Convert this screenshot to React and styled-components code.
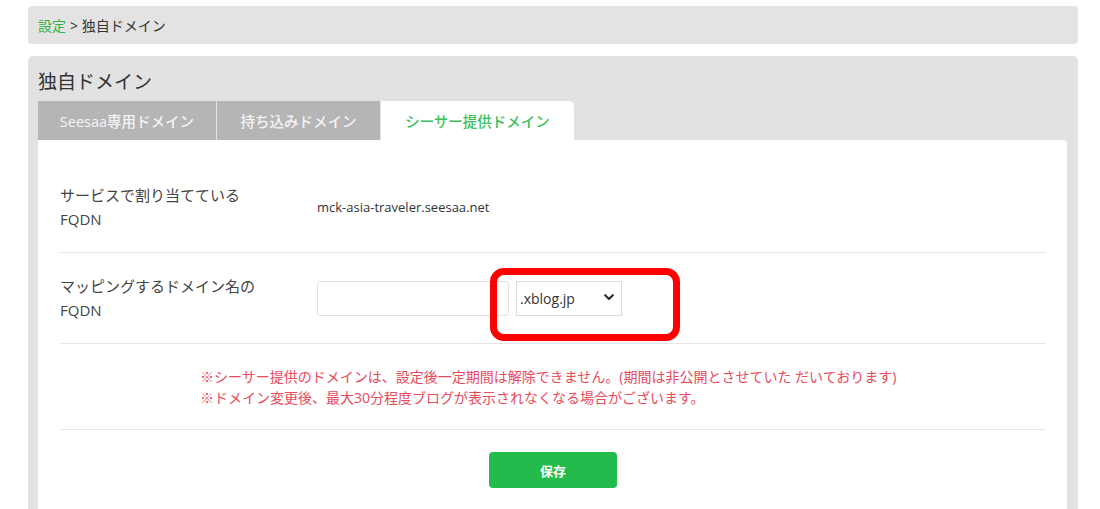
import React from 'react'
import styled, { createGlobalStyle } from 'styled-components'

const GlobalStyle = createGlobalStyle`
  body {
    margin: 0;
    background: #ffffff;
    font-family: 'Open Sans', 'Noto Sans CJK JP', sans-serif;
    color: #333333;
  }
`

const Page = styled.div`
  padding: 6px 22px 0 28px;
  height: 509px;
  box-sizing: border-box;
  overflow: hidden;
`

const Breadcrumb = styled.nav`
  display: flex;
  align-items: center;

  height: 38px;
  padding-left: 10px;
  margin-bottom: 12px;

  font-size: 14px;
  color: #333333;

  background: #e3e3e3;
  border-radius: 4px;
`

const CrumbLink = styled.a`
  color: #2eb34d;
  text-decoration: none;
  margin-right: 4px;
`

const Panel = styled.section`
  padding: 0 11px 0 10px;
  background: #e2e2e2;
  border-radius: 5px 5px 0 0;
  min-height: 460px;
`

const Title = styled.h1`
  margin: 0;
  padding: 13px 0 6px;

  font-size: 19px;
  font-weight: 400;
  line-height: 26px;
  color: #333333;
`

const Tabs = styled.div`
  display: flex;
  gap: 1px;
`

const Tab = styled.button`
  height: 39px;
  width: ${p => p.$width}px;
  padding: 0;

  font-family: 'Open Sans', 'Noto Sans CJK JP', sans-serif;
  font-size: 14.5px;
  font-weight: 500;

  color: ${p => (p.$active ? '#3cbf5c' : '#f4f4f4')};
  background: ${p => (p.$active ? '#ffffff' : '#b5b5b5')};

  border: none;
  border-radius: ${p => (p.$active ? '0 5px 0 0' : '0')};
  cursor: pointer;
`

const Content = styled.div`
  padding: 20px 21px 30px 22px;
  background: #ffffff;
  border-radius: 0 4px 0 0;
`

const Row = styled.div`
  display: flex;
  align-items: center;
  padding: ${p => p.$pad || '21px 0 21px'};
  border-bottom: 1px solid #e6e6e6;
`

const Label = styled.div`
  flex: 0 0 257px;
  font-size: 15px;
  line-height: 24px;
  color: #444444;
`

const Value = styled.div`
  font-size: 13px;
  color: #333333;
`

const Controls = styled.div`
  display: flex;
  align-items: center;
  gap: 7px;
`

const TextInput = styled.input`
  width: 192px;
  height: 35px;
  box-sizing: border-box;
  padding: 0 8px;

  font-size: 14px;

  border: 1px solid #dde3e6;
  border-radius: 3px;
  outline: none;
`

const SelectWrap = styled.div`
  position: relative;
`

const Select = styled.select`
  width: 106px;
  height: 35px;
  box-sizing: border-box;
  padding: 0 20px 0 3px;

  font-family: 'Open Sans', 'Noto Sans CJK JP', sans-serif;
  font-size: 14px;
  color: #333333;

  background: #ffffff;
  border: 1px solid #dcdcdc;
  border-radius: 0;
  appearance: none;
  outline: none;
`

const Chevron = styled.svg`
  position: absolute;
  top: 13px;
  right: 8px;
  pointer-events: none;
`

const Highlight = styled.div`
  position: absolute;
  top: -13px;
  left: -26px;
  width: 190px;
  height: 73px;
  box-sizing: border-box;

  border: 7px solid #ff0000;
  border-radius: 14px;
  pointer-events: none;
`

const Notes = styled.div`
  padding-left: 140px;
  font-size: 14px;
  line-height: 21px;
  color: #e94a5c;
`

const SaveRow = styled.div`
  display: flex;
  justify-content: center;
  padding-top: 22px;
`

const SaveButton = styled.button`
  width: 128px;
  height: 36px;

  font-family: 'Open Sans', 'Noto Sans CJK JP', sans-serif;
  font-size: 13px;
  font-weight: 700;
  color: #ffffff;

  background: #22bb4c;
  border: none;
  border-radius: 4px;
  cursor: pointer;
`

const App = () => (
  <Page>
    <GlobalStyle />
    <Breadcrumb>
      <CrumbLink href="#">設定</CrumbLink>
      <span>&gt; 独自ドメイン</span>
    </Breadcrumb>
    <Panel>
      <Title>独自ドメイン</Title>
      <Tabs>
        <Tab $width={178}>Seesaa専用ドメイン</Tab>
        <Tab $width={163}>持ち込みドメイン</Tab>
        <Tab $width={193} $active>シーサー提供ドメイン</Tab>
      </Tabs>
      <Content>
        <Row $pad="23px 0 21px">
          <Label>
            サービスで割り当てている
            <br />
            FQDN
          </Label>
          <Value>mck-asia-traveler.seesaa.net</Value>
        </Row>
        <Row>
          <Label>
            マッピングするドメイン名の
            <br />
            FQDN
          </Label>
          <Controls>
            <TextInput type="text" />
            <SelectWrap>
              <Select defaultValue="xblog">
                <option value="xblog">.xblog.jp</option>
              </Select>
              <Chevron width="10" height="7" viewBox="0 0 10 7">
                <path d="M1.2 1.2 L5 5 L8.8 1.2" fill="none" stroke="#333" strokeWidth="2.2" strokeLinecap="round" strokeLinejoin="round" />
              </Chevron>
              <Highlight />
            </SelectWrap>
          </Controls>
        </Row>
        <Row $pad="22px 0 21px">
          <Notes>
            ※シーサー提供のドメインは、設定後一定期間は解除できません。(期間は非公開とさせていた だいております)
            <br />
            ※ドメイン変更後、最大30分程度ブログが表示されなくなる場合がございます。
          </Notes>
        </Row>
        <SaveRow>
          <SaveButton>保存</SaveButton>
        </SaveRow>
      </Content>
    </Panel>
  </Page>
)

export default App
